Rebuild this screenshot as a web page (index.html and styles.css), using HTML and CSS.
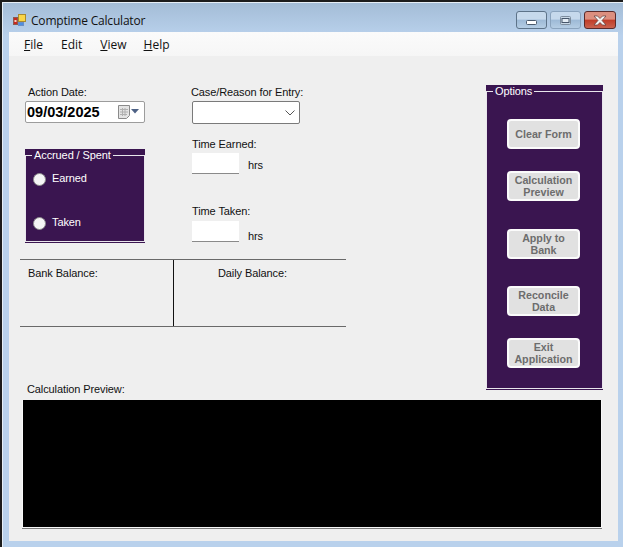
FILE: index.html
```html
<!DOCTYPE html>
<html lang="en">
<head>
  <meta charset="UTF-8">
  <meta name="viewport" content="width=device-width, initial-scale=1.0">
  <title>Comptime Calculator</title>
  <link rel="stylesheet" href="styles.css">
</head>
<body>
  <div class="window">
    <div class="titlebar">
      <svg class="app-icon" width="16" height="16" viewBox="0 0 16 16">
        <rect x="1.500" y="5.500" width="4" height="7" fill="#c9281e" stroke="#8a5a50"/>
        <rect x="2.500" y="8" width="2" height="2" fill="#f4d0c0"/>
        <rect x="6.500" y="2.500" width="7" height="7" fill="#f9d548" stroke="#a88a30"/>
        <rect x="6.500" y="10.500" width="5" height="3" fill="#4f8fe0" stroke="#6a8fc8"/>
      </svg>
      <span class="title">Comptime Calculator</span>
      <div class="win-controls">
        <button class="win-btn" aria-label="Minimize">
          <svg class="min-icon" width="11" height="5" viewBox="0 0 11 5"><rect x=".5" y=".5" width="10" height="4" rx="1" fill="#fff" stroke="#4a5a6c"/></svg>
        </button>
        <button class="win-btn win-restore" aria-label="Restore">
          <svg width="11" height="9" viewBox="0 0 11 9"><rect x=".5" y=".5" width="10" height="8" rx="1" fill="#c9d8e6" stroke="#7d8d9e"/><rect x="2" y="2.500" width="7" height="4" fill="#e4edf5" stroke="#46566a"/></svg>
        </button>
        <button class="win-btn win-close" aria-label="Close">
          <svg width="16" height="11" viewBox="0 0 16 11"><path d="M2 1h3.500l2.500 2.500 2.500-2.500h3.500l-4 4.500 4 4.500h-3.500l-2.500-2.500-2.500 2.500h-3.500l4-4.500z" fill="#f3f3f3" stroke="#5b3a38" stroke-width=".7"/></svg>
        </button>
      </div>
    </div>

    <div class="client">
      <nav class="menubar">
        <span class="menu-item menu-file"><u>F</u>ile</span>
        <span class="menu-item menu-edit">Edit</span>
        <span class="menu-item menu-view"><u>V</u>iew</span>
        <span class="menu-item menu-help"><u>H</u>elp</span>
      </nav>

      <div class="form">
        <div class="form-top">
          <div class="left-pane">
            <div class="entry-row">
              <div class="col-date">
                <label class="field-label date-label">Action Date:</label>
                <div class="date-field">
                  <span class="date-value">09/03/2025</span>
                  <svg class="cal-icon" width="21" height="14" viewBox="0 0 21 14">
                    <path d="M.5 .5h11v10l-3 3h-8z" fill="#e4e4e4" stroke="#8a8a8a"/>
                    <path d="M2 4.500h8M2 7h8M2 9.500h7M4.500 3v8M7 3v8" stroke="#b0b0b0"/>
                    <path d="M13 4h8l-4 4.500z" fill="#4d6185"/>
                  </svg>
                </div>
                <div class="group group-accrued">
                  <fieldset>
                    <legend>Accrued / Spent</legend>
                    <label class="radio-row"><input type="radio" name="kind"><span>Earned</span></label>
                    <label class="radio-row"><input type="radio" name="kind"><span>Taken</span></label>
                  </fieldset>
                </div>
              </div>
              <div class="col-entry">
                <label class="field-label case-label">Case/Reason for Entry:</label>
                <div class="combo">
                  <svg width="10" height="6" viewBox="0 0 10 6"><path d="M.5 .5l4.500 4.500 4.500-4.500" fill="none" stroke="#555"/></svg>
                </div>
                <label class="field-label time-label">Time Earned:</label>
                <div class="hours-row"><div class="hours-box"></div><span class="hrs">hrs</span></div>
                <label class="field-label time-label taken-label">Time Taken:</label>
                <div class="hours-row taken-row"><div class="hours-box"></div><span class="hrs">hrs</span></div>
              </div>
            </div>

            <div class="balances">
              <div class="balance balance-bank">Bank Balance:</div>
              <div class="balance balance-daily">Daily Balance:</div>
            </div>

            <div class="field-label preview-label">Calculation Preview:</div>
          </div>

          <div class="group group-options">
            <fieldset>
              <legend>Options</legend>
              <div class="option-list">
                <button class="opt-btn">Clear Form</button>
                <button class="opt-btn">Calculation Preview</button>
                <button class="opt-btn opt-far">Apply to<br>Bank</button>
                <button class="opt-btn opt-far">Reconcile Data</button>
                <button class="opt-btn">Exit Application</button>
              </div>
            </fieldset>
          </div>
        </div>

        <div class="preview-box"></div>
      </div>
    </div>
  </div>
</body>
</html>
```

FILE: styles.css
```css
/* Windows 7 style form */
* {
  box-sizing: border-box;
}
html, body {
  margin: 0;
  height: 100%;
  overflow: hidden;
}
body {
  background-color: #b9d1ec;
  font-family: "Liberation Sans", Arial, sans-serif;
  font-size: 11px;
  letter-spacing: -.1px;
  color: #111;
}
.window {
  width: 623px;
  height: 547px;
  border-top: 2px solid #1c1c1c;
  border-left: 2px solid #1c1c1c;
  display: flex;
  flex-direction: column;
  background: linear-gradient(#a3bcd6, #b9d1ec 34px);
  box-shadow: inset 1px 1px 0 #e6eef6;
}
.titlebar {
  height: 30px;
  display: flex;
  align-items: center;
  padding: 6px 7px 0 10px;
}
.app-icon {
  margin-right: 3px;
}
.title {
  font-family: "Open Sans", sans-serif;
  font-size: 12px;
  color: #111;
  letter-spacing: -.2px;
}
.win-controls {
  margin-left: auto;
  display: flex;
  gap: 3px;
}
.win-btn {
  width: 31px;
  height: 18px;
  padding: 0;
  border: 1px solid #5d7389;
  border-radius: 3px;
  background: linear-gradient(#c6d9ec 45%, #9db9d6 50%, #b5cde4);
  display: flex;
  align-items: center;
  justify-content: center;
}
.min-icon {
  margin-top: 4px;
}
.win-restore {
  border-color: #8aa3bd;
}
.win-close {
  width: 32px;
  border-color: #5a2a2a;
  background: linear-gradient(#dc8f7f 45%, #c03c28 50%, #c96350);
}
.client {
  flex: 1;
  margin: 0 5px 6px 7px;
  background-color: #efefef;
}
.menubar {
  height: 24px;
  display: flex;
  align-items: center;
  padding-left: 15px;
  background: linear-gradient(#fbfbfb, #f6f6f6);
  font-family: "Open Sans", sans-serif;
  font-size: 12px;
  letter-spacing: 0;
}
.menu-edit { margin-left: 18px; }
.menu-view { margin-left: 18px; }
.menu-help { margin-left: 17px; }
.form-top {
  display: flex;
  justify-content: space-between;
  padding: 0 15px 0 11px;
}
.left-pane {
  width: 326px;
  padding-top: 29px;
}
.entry-row {
  display: flex;
  padding-left: 5px;
}
.col-date {
  width: 120px;
  margin-right: 46px;
}
.field-label {
  display: block;
  line-height: 14px;
  white-space: nowrap;
}
.date-label {
  padding-left: 3px;
}
.date-field {
  height: 22px;
  margin-top: 2px;
  display: flex;
  align-items: center;
  padding: 0 1px;
  border: 1px solid #9c9c9c;
  border-radius: 2px;
  background-color: #fff;
}
.date-value {
  font-size: 14.5px;
  font-weight: bold;
  letter-spacing: 0;
  color: #000;
}
.cal-icon {
  margin-left: auto;
  margin-right: 4px;
}
.group {
  background-color: #3a1550;
  color: #fff;
  padding-bottom: 1px;
}
.group fieldset {
  margin: 0;
  padding: 0;
  height: 100%;
  border: 1px solid #e9e6ec;
}
.group legend {
  margin-left: 6px;
  padding: 0 2px;
  line-height: 13px;
}
.group-accrued {
  height: 94px;
  margin-top: 26px;
}
.radio-row {
  display: flex;
  align-items: center;
  height: 14px;
  padding-left: 7px;
  margin-top: 10px;
}
.radio-row + .radio-row {
  margin-top: 30px;
}
.radio-row span {
  padding-bottom: 2px;
}
.radio-row input {
  appearance: none;
  width: 13px;
  height: 13px;
  margin: 0 6px 0 0;
  border: 1px solid #8d8d8d;
  border-radius: 50%;
  background-color: #f5f5f5;
}
.col-entry {
  width: 120px;
}
.combo {
  width: 108px;
  height: 23px;
  margin: 2px 0 0 1px;
  display: flex;
  align-items: center;
  justify-content: flex-end;
  padding-right: 4px;
  border: 1px solid #7a7a7a;
  border-radius: 2px;
  background-color: #fff;
}
.time-label {
  margin: 13px 0 0 1px;
}
.taken-label {
  margin-top: 30px;
}
.hours-row {
  display: flex;
  align-items: flex-start;
  gap: 9px;
  margin: 2px 0 0 1px;
}
.taken-row {
  margin-top: 3px;
}
.hours-box {
  width: 47px;
  height: 21px;
  background-color: #fff;
  border-bottom: 1px solid #8a8a8a;
}
.hrs {
  line-height: 14px;
  padding-top: 5px;
}
.taken-row .hrs {
  padding-top: 8px;
}
.balances {
  display: flex;
  height: 68px;
  margin-top: 16px;
  border-top: 1px solid #696969;
  border-bottom: 1px solid #696969;
}
.balance {
  padding-top: 6px;
  line-height: 14px;
}
.balance-bank {
  width: 154px;
  padding-left: 8px;
  border-right: 1px solid #111;
}
.balance-daily {
  padding-left: 44px;
}
.preview-label {
  margin: 55px 0 0 7px;
}
.group-options {
  width: 117px;
  height: 305px;
  margin-top: 29px;
}
.option-list {
  display: flex;
  flex-direction: column;
  align-items: center;
  gap: 22px;
  padding: 21px 2px 0 0;
}
.opt-btn {
  width: 73px;
  height: 30px;
  padding: 0 3px;
  border: 2px solid #fbfbfb;
  border-radius: 4px;
  background-color: #e1e1e1;
  color: #6d6d6d;
  font-family: "Liberation Sans", Arial, sans-serif;
  font-size: 10.7px;
  font-weight: bold;
  letter-spacing: 0;
  line-height: 12px;
}
.opt-far {
  margin-top: 6px;
}
.opt-far + .opt-far {
  margin-top: 5px;
}
.preview-box {
  width: 580px;
  height: 128px;
  margin: 4px 0 0 13px;
  background-color: #000;
  border: 1px solid #f8f8f8;
  border-top: 0;
  box-shadow: 0 1px 0 #7d7d7d;
}
```
